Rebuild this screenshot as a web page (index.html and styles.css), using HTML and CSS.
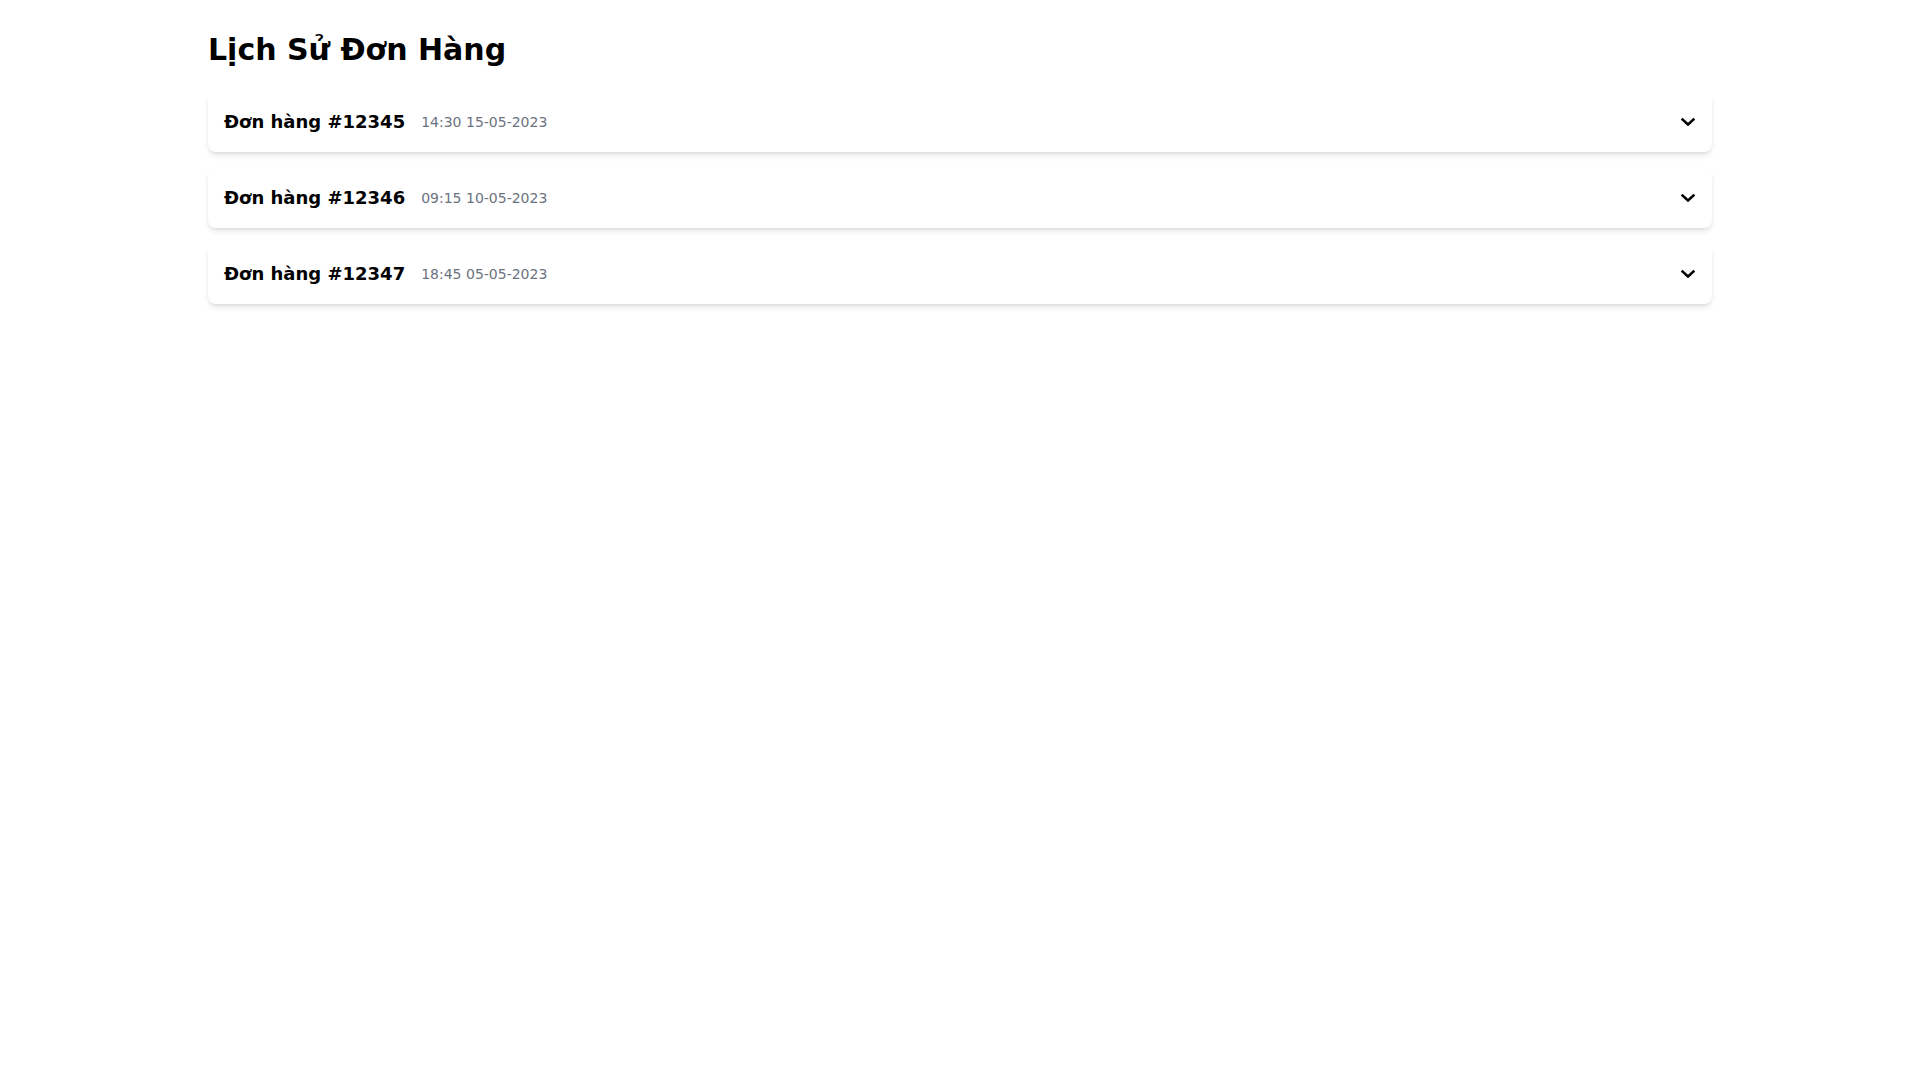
FILE: index.html
```html
<!DOCTYPE html>
<html lang="vi">
<head>
  <meta charset="utf-8">
  <title>Lịch Sử Đơn Hàng</title>
  <link rel="stylesheet" href="styles.css">
</head>
<body>
  <div class="container">
    <h1 class="pageTitle">Lịch Sử Đơn Hàng</h1>
    <div class="orderList">
      <div class="orderCard">
        <div class="orderHead">
          <span class="orderName">Đơn hàng #12345</span>
          <span class="orderTime">14:30 15-05-2023</span>
        </div>
        <svg class="chevron" viewBox="5 123 438 266" preserveAspectRatio="none" fill="currentColor"><path d="M207.029 381.476L12.686 187.132c-9.373-9.373-9.373-24.569 0-33.941l22.667-22.667c9.357-9.357 24.522-9.375 33.901-.04L224 284.505l154.745-154.021c9.379-9.335 24.544-9.317 33.901.04l22.667 22.667c9.373 9.373 9.373 24.569 0 33.941L240.971 381.476c-9.373 9.372-24.569 9.372-33.942 0z"/></svg>
      </div>
      <div class="orderCard">
        <div class="orderHead">
          <span class="orderName">Đơn hàng #12346</span>
          <span class="orderTime">09:15 10-05-2023</span>
        </div>
        <svg class="chevron" viewBox="5 123 438 266" preserveAspectRatio="none" fill="currentColor"><path d="M207.029 381.476L12.686 187.132c-9.373-9.373-9.373-24.569 0-33.941l22.667-22.667c9.357-9.357 24.522-9.375 33.901-.04L224 284.505l154.745-154.021c9.379-9.335 24.544-9.317 33.901.04l22.667 22.667c9.373 9.373 9.373 24.569 0 33.941L240.971 381.476c-9.373 9.372-24.569 9.372-33.942 0z"/></svg>
      </div>
      <div class="orderCard">
        <div class="orderHead">
          <span class="orderName">Đơn hàng #12347</span>
          <span class="orderTime">18:45 05-05-2023</span>
        </div>
        <svg class="chevron" viewBox="5 123 438 266" preserveAspectRatio="none" fill="currentColor"><path d="M207.029 381.476L12.686 187.132c-9.373-9.373-9.373-24.569 0-33.941l22.667-22.667c9.357-9.357 24.522-9.375 33.901-.04L224 284.505l154.745-154.021c9.379-9.335 24.544-9.317 33.901.04l22.667 22.667c9.373 9.373 9.373 24.569 0 33.941L240.971 381.476c-9.373 9.372-24.569 9.372-33.942 0z"/></svg>
      </div>
    </div>
  </div>
</body>
</html>
```

FILE: styles.css
```css
* {
  margin: 0;
  padding: 0;
  box-sizing: border-box;
}
body {
  font-family: "DejaVu Sans", sans-serif;
  color: #000;
  background: #fff;
}
.container {
  width: 1536px;
  margin: 0 auto;
  padding: 32px 16px;
}
.pageTitle {
  font-size: 30px;
  line-height: 36px;
  font-weight: bold;
  margin-bottom: 24px;
}
.orderList {
  display: flex;
  flex-direction: column;
  gap: 16px;
}
.orderCard {
  display: flex;
  align-items: center;
  justify-content: space-between;
  padding: 16px;
  background: #fff;
  border-radius: 8px;
  box-shadow: 0 4px 6px -1px rgba(0, 0, 0, .1), 0 2px 4px -2px rgba(0, 0, 0, .1);
}
.orderHead {
  display: flex;
  align-items: center;
  gap: 16px;
}
.orderName {
  font-size: 18px;
  line-height: 28px;
  font-weight: bold;
}
.orderTime {
  font-size: 14px;
  line-height: 20px;
  color: #6b7280;
}
.chevron {
  width: 14px;
  height: 8px;
  margin-right: 1px;
  color: #000;
}
```
